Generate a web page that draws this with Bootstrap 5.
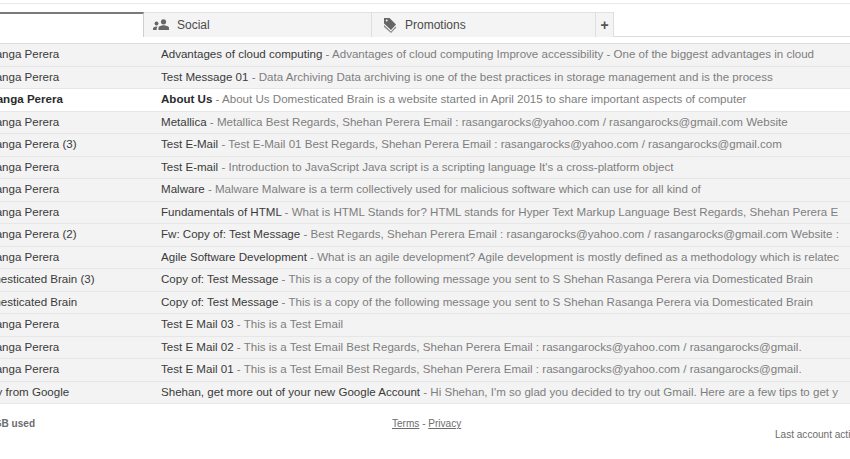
<!DOCTYPE html>
<html lang="en">
<head>
<meta charset="utf-8">
<title>Inbox</title>
<link href="https://cdn.jsdelivr.net/npm/bootstrap@5.3.0/dist/css/bootstrap.min.css" rel="stylesheet">
<style>
html,body{height:459px;overflow:hidden;background:#fff;}
body{font-family:"Liberation Sans",Arial,sans-serif;font-size:11.57px;color:#3a3a3a;}
.topline{height:1px;margin-top:3px;background:#e9e9e9;}
.tabbar{height:25px;margin-top:8px;border-bottom:1px solid #dcdcdc;}
.tabitem{height:25px;background:#f4f4f4;border-top:1px solid #e2e2e2;border-right:1px solid #dedede;color:#4a4a4a;font-size:12px;}
.tab-on{width:144px;background:#fff;border-top:2px solid #7a7a7a;border-right:1px solid #cfcfcf;}
.tab-social{width:228px;padding-left:9px;gap:7px;}
.tab-promo{width:224px;padding-left:11px;gap:8px;}
.tab-add{width:18px;font-size:14px;font-weight:700;color:#555;}
.maillist{margin-top:6px;border-top:1px solid #dedede;}
.mailrow{height:22.5px;background:#f3f3f3;border-bottom:1px solid #e6e6e6;line-height:21px;white-space:nowrap;}
.mailrow.unread{background:#fff;font-weight:700;color:#2a2a2a;}
.who{width:161px;flex:none;overflow:hidden;}
.who span{display:block;}
.what{width:681px;flex:none;overflow:hidden;}
.snip{color:#7e7e7e;font-weight:400;}
.foot{font-size:10.05px;color:#6c6c6c;}
.usedtxt{width:392px;flex:none;padding-top:12px;font-weight:700;overflow:hidden;white-space:nowrap;}
.usedtxt span{display:block;margin-left:-23px;}
.legal{padding-top:12px;width:383px;flex:none;}
.legal a{color:#6c6c6c;}
.lastact{padding-top:23px;white-space:nowrap;}
.off-a{margin-left:-68px;}
.off-b{margin-left:-69.5px;}
.off-d{margin-left:-24px;}
.off-f{margin-left:-23.6px;}
</style>
</head>
<body>
<div class="topline"></div>
<div class="tabbar d-flex">
  <div class="tabitem tab-on"></div>
  <div class="tabitem tab-social d-flex align-items-center">
    <svg width="17" height="12" viewBox="0 0 17 12" fill="#666"><circle cx="10.5" cy="2.8" r="2.6"/><path d="M5.500 11V9c0-1.800 3-2.700 5-2.700s5.500.9 5.500 2.700v2z"/><circle cx="3.500" cy="4.500" r="1.900"/><path d="M0 11V9.500c0-1.300 2-2 3.500-2 .5 0 1 .1 1.100.2-.6.400-.9.900-.9 1.500V11z"/></svg>
    <span>Social</span>
  </div>
  <div class="tabitem tab-promo d-flex align-items-center">
    <svg width="14" height="16" viewBox="0 0 14 16" fill="#666"><path d="M1 1h5.500L13 7.500 8 13 1 6.500z"/><path d="M1 8l7 6.500 4.500-5 .8.900L8 16 1 10z" fill="#888"/><circle cx="3.700" cy="3.500" r="1" fill="#f3f3f3"/></svg>
    <span>Promotions</span>
  </div>
  <div class="tabitem tab-add d-flex align-items-center justify-content-center">+</div>
</div>
<div class="maillist">
  <div class="mailrow d-flex"><div class="who"><span class="off-a">Shehan Rasanga Perera</span></div><div class="what">Advantages of cloud computing <span class="snip">- Advantages of cloud computing Improve accessibility - One of the biggest advantages in cloud</span></div></div>
  <div class="mailrow d-flex"><div class="who"><span class="off-a">Shehan Rasanga Perera</span></div><div class="what">Test Message 01 <span class="snip">- Data Archiving Data archiving is one of the best practices in storage management and is the process</span></div></div>
  <div class="mailrow unread d-flex"><div class="who"><span class="off-b">Shehan Rasanga Perera</span></div><div class="what">About Us <span class="snip">- About Us Domesticated Brain is a website started in April 2015 to share important aspects of computer</span></div></div>
  <div class="mailrow d-flex"><div class="who"><span class="off-a">Shehan Rasanga Perera</span></div><div class="what">Metallica <span class="snip">- Metallica Best Regards, Shehan Perera Email : rasangarocks@yahoo.com / rasangarocks@gmail.com Website</span></div></div>
  <div class="mailrow d-flex"><div class="who"><span class="off-a">Shehan Rasanga Perera (3)</span></div><div class="what">Test E-Mail <span class="snip">- Test E-Mail 01 Best Regards, Shehan Perera Email : rasangarocks@yahoo.com / rasangarocks@gmail.com</span></div></div>
  <div class="mailrow d-flex"><div class="who"><span class="off-a">Shehan Rasanga Perera</span></div><div class="what">Test E-mail <span class="snip">- Introduction to JavaScript Java script is a scripting language It's a cross-platform object</span></div></div>
  <div class="mailrow d-flex"><div class="who"><span class="off-a">Shehan Rasanga Perera</span></div><div class="what">Malware <span class="snip">- Malware Malware is a term collectively used for malicious software which can use for all kind of</span></div></div>
  <div class="mailrow d-flex"><div class="who"><span class="off-a">Shehan Rasanga Perera</span></div><div class="what">Fundamentals of HTML <span class="snip">- What is HTML Stands for? HTML stands for Hyper Text Markup Language Best Regards, Shehan Perera E</span></div></div>
  <div class="mailrow d-flex"><div class="who"><span class="off-a">Shehan Rasanga Perera (2)</span></div><div class="what">Fw: Copy of: Test Message <span class="snip">- Best Regards, Shehan Perera Email : rasangarocks@yahoo.com / rasangarocks@gmail.com Website :</span></div></div>
  <div class="mailrow d-flex"><div class="who"><span class="off-a">Shehan Rasanga Perera</span></div><div class="what">Agile Software Development <span class="snip">- What is an agile development? Agile development is mostly defined as a methodology which is relatec</span></div></div>
  <div class="mailrow d-flex"><div class="who"><span class="off-f">Domesticated Brain (3)</span></div><div class="what">Copy of: Test Message <span class="snip">- This is a copy of the following message you sent to S Shehan Rasanga Perera via Domesticated Brain</span></div></div>
  <div class="mailrow d-flex"><div class="who"><span class="off-f">Domesticated Brain</span></div><div class="what">Copy of: Test Message <span class="snip">- This is a copy of the following message you sent to S Shehan Rasanga Perera via Domesticated Brain</span></div></div>
  <div class="mailrow d-flex"><div class="who"><span class="off-a">Shehan Rasanga Perera</span></div><div class="what">Test E Mail 03 <span class="snip">- This is a Test Email</span></div></div>
  <div class="mailrow d-flex"><div class="who"><span class="off-a">Shehan Rasanga Perera</span></div><div class="what">Test E Mail 02 <span class="snip">- This is a Test Email Best Regards, Shehan Perera Email : rasangarocks@yahoo.com / rasangarocks@gmail.</span></div></div>
  <div class="mailrow d-flex"><div class="who"><span class="off-a">Shehan Rasanga Perera</span></div><div class="what">Test E Mail 01 <span class="snip">- This is a Test Email Best Regards, Shehan Perera Email : rasangarocks@yahoo.com / rasangarocks@gmail.</span></div></div>
  <div class="mailrow d-flex"><div class="who"><span class="off-d">Andy from Google</span></div><div class="what">Shehan, get more out of your new Google Account <span class="snip">- Hi Shehan, I'm so glad you decided to try out Gmail. Here are a few tips to get y</span></div></div>
</div>
<div class="foot d-flex">
  <div class="usedtxt"><span>0.1 GB used</span></div>
  <div class="legal"><a href="#">Terms</a> - <a href="#">Privacy</a></div>
  <div class="lastact">Last account activity</div>
</div>
</body>
</html>
